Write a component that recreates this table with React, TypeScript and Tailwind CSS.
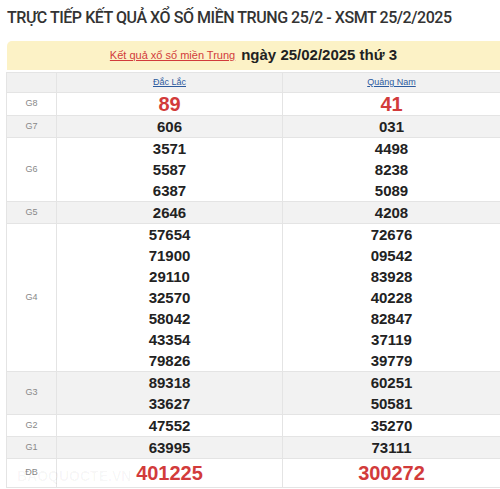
import React from 'react';

type Row = { label: string; a: string[]; b: string[]; kind?: 'g8' | 'db' };

const rows: Row[] = [
  { label: 'G8', a: ['89'], b: ['41'], kind: 'g8' },
  { label: 'G7', a: ['606'], b: ['031'] },
  { label: 'G6', a: ['3571', '5587', '6387'], b: ['4498', '8238', '5089'] },
  { label: 'G5', a: ['2646'], b: ['4208'] },
  {
    label: 'G4',
    a: ['57654', '71900', '29110', '32570', '58042', '43354', '79826'],
    b: ['72676', '09542', '83928', '40228', '82847', '37119', '39779'],
  },
  { label: 'G3', a: ['89318', '33627'], b: ['60251', '50581'] },
  { label: 'G2', a: ['47552'], b: ['35270'] },
  { label: 'G1', a: ['63995'], b: ['73111'] },
  { label: 'ĐB', a: ['401225'], b: ['300272'], kind: 'db' },
];

const Nums = ({ items, kind }: { items: string[]; kind?: Row['kind'] }) => {
  if (kind === 'g8')
    return <div className="text-[20px] leading-[22px] font-bold text-[#d23b3b]">{items[0]}</div>;
  if (kind === 'db')
    return <div className="text-[20px] leading-[28px] font-bold text-[#d23b3b]">{items[0]}</div>;
  return (
    <>
      {items.map((n) => (
        <div key={n} className="text-[15px] leading-[21px] font-bold text-[#222]">
          {n}
        </div>
      ))}
    </>
  );
};

export default function App() {
  return (
    <div className="w-[500px] h-[489px] bg-white overflow-hidden font-['Liberation_Sans',Arial,sans-serif]">
      <h1 className="pl-[7px] pt-[8px] h-[41px] text-[16px] leading-[20px] font-medium tracking-[-0.45px] text-[#333] font-['Roboto',sans-serif] whitespace-nowrap">
        TRỰC TIẾP KẾT QUẢ XỔ SỐ MIỀN TRUNG 25/2 - XSMT 25/2/2025
      </h1>
      <div className="ml-[7px] h-[29px] bg-[#fcf2c6] rounded-tl-[5px] flex items-center justify-center gap-[6px]">
        <a className="text-[11px] text-[#d23b3b] underline">Kết quả xổ số miền Trung</a>
        <span className="text-[15px] font-bold text-[#222]">ngày 25/02/2025 thứ 3</span>
      </div>
      <table className="ml-[6px] mt-[2px] w-[494px] table-fixed border-collapse">
        <colgroup>
          <col className="w-[50px]" />
          <col className="w-[226px]" />
          <col className="w-[218px]" />
        </colgroup>
        <thead>
          <tr className="bg-[#f1f1f1] h-[20px]">
            <th className="border border-[#e4e4e4]"></th>
            <th className="border border-[#e4e4e4] text-[9px] font-normal text-[#2d5b9e] underline">Đắc Lắc</th>
            <th className="border border-[#e4e4e4] text-[9px] font-normal text-[#2d5b9e] underline">Quảng Nam</th>
          </tr>
        </thead>
        <tbody>
          {rows.map((r, i) => (
            <tr key={r.label} className={i % 2 === 1 ? 'bg-[#f2f2f2]' : 'bg-white'}>
              <td className="relative border border-[#e4e4e4] text-center text-[9px] text-[#888] p-0">
                {r.label}
                {r.kind === 'db' && (
                  <span className="absolute left-[10px] top-[7px] text-[14px] font-bold text-black/[0.035] whitespace-nowrap">
                    BAOQUOCTE.VN
                  </span>
                )}
              </td>
              <td className="border border-[#e4e4e4] text-center p-0">
                <Nums items={r.a} kind={r.kind} />
              </td>
              <td className="border border-[#e4e4e4] text-center p-0">
                <Nums items={r.b} kind={r.kind} />
              </td>
            </tr>
          ))}
        </tbody>
      </table>
    </div>
  );
}
